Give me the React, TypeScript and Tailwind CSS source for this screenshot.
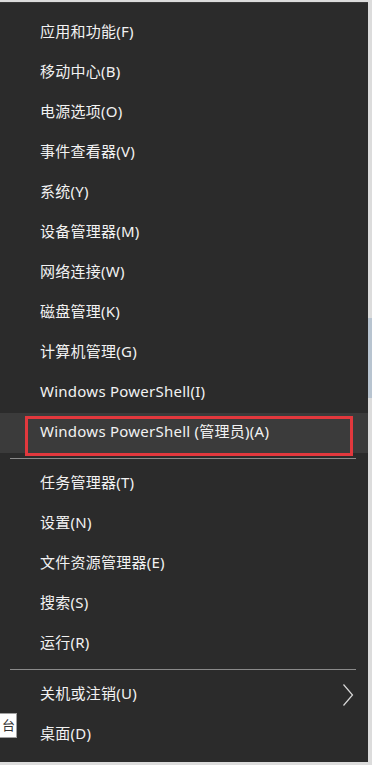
import React from 'react';

const font = '"Noto Sans", "Noto Sans CJK SC", sans-serif';

const groupA = [
  '应用和功能(F)',
  '移动中心(B)',
  '电源选项(O)',
  '事件查看器(V)',
  '系统(Y)',
  '设备管理器(M)',
  '网络连接(W)',
  '磁盘管理(K)',
  '计算机管理(G)',
  'Windows PowerShell(I)',
];

const groupB = ['任务管理器(T)', '设置(N)', '文件资源管理器(E)', '搜索(S)', '运行(R)'];

const Item: React.FC<{ label: string; active?: boolean; submenu?: boolean }> = ({ label, active, submenu }) => (
  <div className={`relative h-[40px] flex items-center pl-[40px] pr-[14px] ${active ? 'bg-[#3b3b3b]' : ''}`}>
    <span className="text-[15px] tracking-[0.25px] text-[#f2f2f2] leading-none whitespace-nowrap pb-[3px]">{label}</span>
    {submenu && (
      <svg className="ml-auto" width="12" height="24" viewBox="0 0 12 24" fill="none">
        <path d="M1.5 1.5 L10.5 12 L1.5 22.5" stroke="#d8d8d8" strokeWidth="1.2" />
      </svg>
    )}
    {active && (
      <div className="absolute left-[25px] top-[3px] w-[328px] h-[40px] border-[3px] border-[#e2383d]" />
    )}
  </div>
);

const Separator = () => (
  <div className="py-[5px] pl-[10px] pr-[12px]">
    <div className="h-px bg-[#8a8a8a]" />
  </div>
);

export default function App() {
  return (
    <div className="relative w-[372px] h-[765px] bg-[#dcdcdc] overflow-hidden" style={{ fontFamily: font }}>
      <div className="w-[368px] h-[760px] mt-[2px] bg-[#2b2b2b] pt-[10px] border-t border-[#3a3a3a]">
        {groupA.map((l) => (
          <Item key={l} label={l} />
        ))}
        <Item label="Windows PowerShell (管理员)(A)" active />
        <Separator />
        {groupB.map((l) => (
          <Item key={l} label={l} />
        ))}
        <Separator />
        <Item label="关机或注销(U)" submenu />
        <Item label="桌面(D)" />
      </div>
      <div className="absolute left-0 top-[713px] w-[17px] h-[25px] bg-white border border-[#a0a0a0] border-l-0 overflow-hidden flex items-center justify-end">
        <span className="text-[13px] text-[#333] leading-none mr-[1px]">台</span>
      </div>
      <div className="absolute right-0 top-[318px] w-[4px] h-[80px] bg-[#b8c4d0]" />
    </div>
  );
}
